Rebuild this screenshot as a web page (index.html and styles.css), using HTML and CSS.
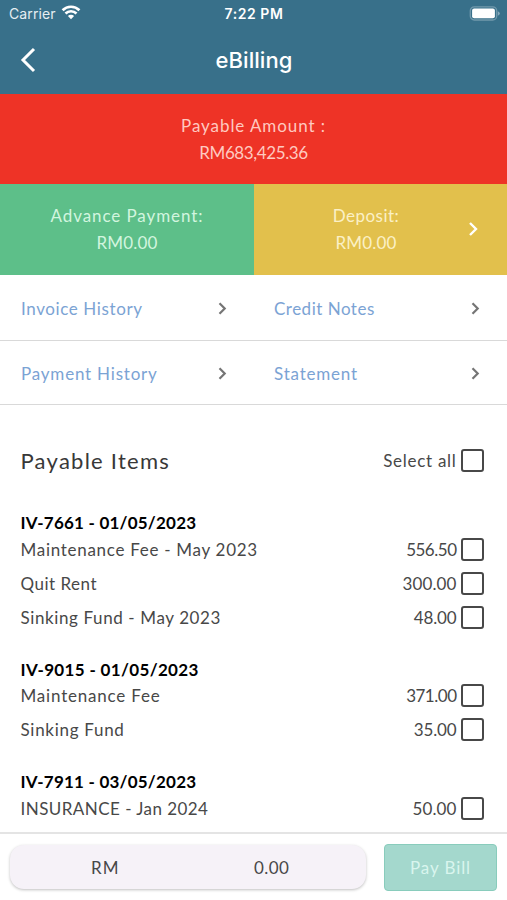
FILE: index.html
```html
<!DOCTYPE html>
<html lang="en">
<head>
<meta charset="utf-8">
<title>eBilling</title>
<link rel="stylesheet" href="styles.css">
</head>
<body>
<div class="app">
  <header class="header">
    <div class="status">
      <div class="carrier"><span>Carrier</span>
        <svg width="20" height="15" viewBox="0 0 20 15" fill="none" stroke="#fff" stroke-width="2.7"><path d="M1.6 5.2a12 12 0 0 1 16.8 0M4.5 8.5a7.8 7.8 0 0 1 11 0"/><path d="M10 14.2 6.9 11a4.4 4.4 0 0 1 6.2 0z" fill="#fff" stroke="none"/></svg>
      </div>
      <span class="time">7:22 PM</span>
      <svg class="battery" width="31" height="15" viewBox="0 0 31 15"><rect x="1.3" y=".8" width="26.4" height="13.2" rx="4" fill="none" stroke="#7199ac" stroke-width="1.3"/><rect x="3.1" y="2.5" width="22.8" height="9.8" rx="2" fill="#fff"/><path d="M28.8 5.2q2 .8 2 2.3t-2 2.3z" fill="#86a9bb"/></svg>
    </div>
    <div class="titlebar">
      <svg class="back" width="16" height="26" viewBox="0 0 16 26" fill="none" stroke="#fff" stroke-width="3"><path d="M14 2 3 13l11 11"/></svg>
      <h1>eBilling</h1>
    </div>
  </header>

  <section class="payable">
    <span class="t-90">Payable Amount :</span>
    <span class="t-n39">RM683,425.36</span>
  </section>
  <section class="balances">
    <div class="advance"><span class="t-90">Advance Payment:</span><span class="t-15">RM0.00</span></div>
    <div class="deposit">
      <div class="deposit-text"><span class="t-50">Deposit:</span><span class="t-15">RM0.00</span></div>
      <svg width="11" height="16" viewBox="0 0 11 16" fill="none" stroke="#fff" stroke-width="2.4"><path d="m2 2 6 6-6 6"/></svg>
    </div>
  </section>

  <nav class="links">
    <a class="link"><span class="t-60">Invoice History</span><svg class="chev" viewBox="0 0 9 13"><path d="m1.5 1.3 5.2 5.2-5.2 5.2"/></svg></a>
    <a class="link"><span class="t-50">Credit Notes</span><svg class="chev" viewBox="0 0 9 13"><path d="m1.5 1.3 5.2 5.2-5.2 5.2"/></svg></a>
    <a class="link"><span class="t-80">Payment History</span><svg class="chev" viewBox="0 0 9 13"><path d="m1.5 1.3 5.2 5.2-5.2 5.2"/></svg></a>
    <a class="link"><span class="t-80">Statement</span><svg class="chev" viewBox="0 0 9 13"><path d="m1.5 1.3 5.2 5.2-5.2 5.2"/></svg></a>
  </nav>

  <main class="items">
    <div class="items-head">
      <h2>Payable Items</h2>
      <span class="t-75">Select all</span><i class="box"></i>
    </div>
    <section class="group">
      <h3>IV-7661 - 01/05/2023</h3>
      <div class="row"><span class="name t-75">Maintenance Fee - May 2023</span><span class="t-n49">556.50</span><i class="box"></i></div>
      <div class="row"><span class="name t-50">Quit Rent</span><span class="t-10">300.00</span><i class="box"></i></div>
      <div class="row"><span class="name t-60">Sinking Fund - May 2023</span><span class="t-n15">48.00</span><i class="box"></i></div>
    </section>
    <section class="group">
      <h3 class="t-34">IV-9015 - 01/05/2023</h3>
      <div class="row"><span class="name t-80">Maintenance Fee</span><span class="t-n49">371.00</span><i class="box"></i></div>
      <div class="row"><span class="name t-75">Sinking Fund</span><span class="t-n15">35.00</span><i class="box"></i></div>
    </section>
    <section class="group">
      <h3>IV-7911 - 03/05/2023</h3>
      <div class="row"><span class="name t-45">INSURANCE - Jan 2024</span><span class="t-10">50.00</span><i class="box"></i></div>
    </section>
  </main>

  <footer class="footer">
    <div class="total"><span class="currency">RM</span><span class="sum">0.00</span></div>
    <button class="pay">Pay Bill</button>
  </footer>
</div>
</body>
</html>
```
FILE: styles.css
```css
* { box-sizing: border-box; }
body { margin: 0; background: #fff; }
.app {
  width: 507px; height: 900px; overflow: hidden;
  display: flex; flex-direction: column;
  font: 17px/27px Lato, "Liberation Sans", sans-serif;
  color: #484848;
}
h1, h2, h3 { margin: 0; font-weight: 400; }
svg { display: block; flex: none; }

/* letter spacing steps, in hundredths of a pixel */
.t-n49 { letter-spacing: -.49px; }
.t-n39 { letter-spacing: -.39px; }
.t-n15 { letter-spacing: -.15px; }
.t-10 { letter-spacing: .1px; }
.t-15 { letter-spacing: .15px; }
.t-45 { letter-spacing: .45px; }
.t-50 { letter-spacing: .5px; }
.t-60 { letter-spacing: .61px; }
.t-75 { letter-spacing: .71px; }
.t-80 { letter-spacing: .8px; }
.t-90 { letter-spacing: .92px; }

.header { height: 94px; background: #38708a; color: #fff; font-family: Inter, sans-serif; }
.status {
  height: 27px; padding: 0 8px 0 9px;
  display: grid; grid-template-columns: 1fr auto 1fr; align-items: center;
}
.carrier { display: flex; align-items: center; gap: 5px; font-size: 14px; letter-spacing: .1px; color: #e6eef2; }
.carrier svg { margin-top: -2px; }
.time { font-size: 14px; font-weight: 600; letter-spacing: .55px; }
.battery { justify-self: end; margin-right: -1px; }
.titlebar {
  height: 67px; padding: 0 20px;
  display: grid; grid-template-columns: 60px 1fr 60px; align-items: center;
}
.back { margin-top: -2px; }
h1 { font-size: 22px; font-weight: 500; letter-spacing: .05px; text-align: center; padding-left: 1px; }

.payable {
  height: 90px; background: #ee3326; color: #ffc9c0;
  display: flex; flex-direction: column; align-items: center; justify-content: center;
}
.balances { height: 91px; padding-bottom: .5px; display: grid; grid-template-columns: 254px 1fr; }
.advance, .deposit-text { display: flex; flex-direction: column; align-items: center; justify-content: center; padding-bottom: 1px; }
.advance { background: #5dbf89; color: #d2f5df; }
.deposit { display: flex; align-items: center; background: #e2c04c; color: #fbf0c6; padding: 0 28px 0 0; }
.deposit-text { width: 213px; padding-left: 11px; margin-right: auto; }

.links { display: grid; grid-template-columns: 253px 254px; grid-auto-rows: 65px; }
.link {
  display: flex; align-items: center; justify-content: space-between;
  padding: 2px 26px 0 21px; border-bottom: 1px solid #d9d9d9; color: #7ba3d4;
}
.link:nth-child(even) { padding-right: 27px; }
.link:nth-child(-n+2) { margin-bottom: -1px; }
.chev { width: 9px; height: 13px; fill: none; stroke: #757575; stroke-width: 2.2; }

.items { flex: 1; min-height: 0; overflow: hidden; padding: 38px 23px 0 20.5px; }
.items-head { height: 35px; display: flex; align-items: center; }
h2 { flex: 1; font-size: 22px; letter-spacing: 1.25px; color: #383838; }
.box { flex: none; width: 23px; height: 23px; border: 2px solid #484848; border-radius: 3px; margin-left: 4.5px; }
.group { margin-top: 24.5px; }
.items-head + .group { margin-top: 34px; }
h3 { height: 20px; line-height: 21px; font-size: 17px; font-weight: 700; letter-spacing: .22px; color: #000; }
h3.t-34 { letter-spacing: .34px; }
.row { height: 34px; display: flex; align-items: center; }
.name { flex: 1; }

.footer {
  height: 68px; border-top: 2px solid #e4e4e4; padding: 11px 10px 0;
  display: flex; justify-content: space-between; align-items: flex-start;
}
.total {
  width: 356px; height: 44px; border-radius: 14px; background: #f6f2f8;
  box-shadow: 0 1px 3px rgba(0, 0, 0, .25);
  display: flex; align-items: center;
}
.currency { width: 163px; padding-left: 81px; letter-spacing: 1px; }
.sum { flex: 1; padding-left: 81px; letter-spacing: .42px; }
.pay {
  width: 113px; height: 47px; margin: -1px 0 0; padding: 0; border: 1px solid #89ccbc; border-radius: 4px;
  background: #a4d8cd; color: #d9f5ee; font: inherit; letter-spacing: .9px;
}
```
